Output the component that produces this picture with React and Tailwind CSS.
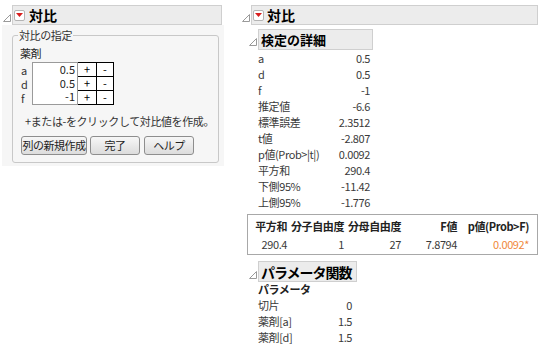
import React from 'react';

const font = { fontFamily: '"Noto Sans CJK JP", "Noto Sans", sans-serif' };

function Disclosure() {
    return (
        <svg width="8" height="8" viewBox="0 0 8 8" className="shrink-0">
            <path d="M7.5 0.5 L7.5 7.5 L0.5 7.5 Z" fill="none" stroke="#9a9a9a" strokeWidth="1" />
        </svg>
    );
}

function MenuButton() {
    return (
        <div className="w-[11px] h-[11px] border border-[#b4b4b4] bg-white rounded-[2px] flex items-center justify-center shrink-0">
            <svg width="7" height="4" viewBox="0 0 7 4">
                <path d="M0 0 L7 0 L3.5 4 Z" fill="#d81e1e" />
            </svg>
        </div>
    );
}

function Row({ label, value, labelW = 'w-[72px]', valueW = 'w-[40px]' }) {
    return (
        <div className="flex h-[16px] items-center text-[11px] leading-[16px] tracking-[-0.4px] text-[#3a3a3a]">
            <span className={`${labelW} whitespace-nowrap`}>{label}</span>
            <span className={`${valueW} text-right whitespace-nowrap`}>{value}</span>
        </div>
    );
}

function Button({ children, className }) {
    return (
        <div className={`h-[19px] border border-[#8e8e8e] rounded-[3px] bg-gradient-to-b from-[#f7f7f7] to-[#dcdcdc] flex items-center justify-center text-[11px] leading-[17px] tracking-[-0.5px] text-[#222] whitespace-nowrap ${className}`}>
            {children}
        </div>
    );
}

export default function App() {
    const contrast = [
        { label: 'a', value: '0.5' },
        { label: 'd', value: '0.5' },
        { label: 'f', value: '-1' },
    ];

    const details = [
        ['a', '0.5'],
        ['d', '0.5'],
        ['f', '-1'],
        ['推定値', '-6.6'],
        ['標準誤差', '2.3512'],
        ['t値', '-2.807'],
        ['p値(Prob>|t|)', '0.0092'],
        ['平方和', '290.4'],
        ['下側95%', '-11.42'],
        ['上側95%', '-1.776'],
    ];

    // column widths measured to each right edge
    const ftest = [
        { head: '平方和', value: '290.4', w: 'w-[30px]' },
        { head: '分子自由度', value: '1', w: 'w-[57px]' },
        { head: '分母自由度', value: '27', w: 'w-[57px]' },
        { head: 'F値', value: '7.8794', w: 'w-[56px]' },
        { head: 'p値(Prob>F)', value: '0.0092*', w: 'w-[72px]', accent: true },
    ];

    const params = [
        ['切片', '0'],
        ['薬剤[a]', '1.5'],
        ['薬剤[d]', '1.5'],
    ];

    return (
        <div className="w-[543px] h-[349px] bg-white flex overflow-hidden" style={font}>
            {/* left: contrast specification */}
            <div className="w-[237px] shrink-0 pt-[5px]">
                <div className="flex items-center">
                    <div className="w-[12px] pl-[3px] flex items-end h-[19px] pb-[3px]">
                        <Disclosure />
                    </div>
                    <div className="w-[210px] h-[20px] border border-[#cfcfcf] bg-[#ececec] flex items-center pl-[1px] gap-[4px]">
                        <MenuButton />
                        <span className="text-[14px] font-bold text-black leading-[18px]">対比</span>
                    </div>
                </div>
                <div className="ml-[2px] w-[222px] h-[141px] bg-[#f6f6f6] pt-[10px] pl-[10px]">
                    <div className="relative w-[207px] h-[128px] border border-[#c8c8c8] rounded-[3px] bg-[#f6f6f6] pl-[7px] pt-[9px]">
                        <span className="absolute left-[5px] top-[-9px] px-[1px] bg-[#f6f6f6] text-[11px] tracking-[-0.4px] text-[#333] leading-[16px]">対比の指定</span>
                        <div className="text-[11px] tracking-[-0.4px] text-[#222] leading-[16px]">薬剤</div>
                        <div className="flex mt-[1px]">
                            <div className="w-[12px] flex flex-col text-[11px] text-[#333] pl-[1px] pt-[1px]">
                                {contrast.map((c) => (
                                    <div key={c.label} className="h-[14px] leading-[14px]">{c.label}</div>
                                ))}
                            </div>
                            <div className="w-[46px] h-[43px] border border-[#9a9a9a] bg-white flex flex-col text-[11px] text-[#222] pr-[2px]">
                                {contrast.map((c) => (
                                    <div key={c.label} className="h-[13.6px] leading-[13.6px] text-right">{c.value}</div>
                                ))}
                            </div>
                            <div className="flex flex-col border-t border-black">
                                {contrast.map((c) => (
                                    <div key={c.label} className="flex h-[14px] border-b border-black bg-white text-[11px] leading-[13px]">
                                        <div className="w-[19px] border-r border-black text-center">+</div>
                                        <div className="w-[17px] border-r border-black text-center">-</div>
                                    </div>
                                ))}
                            </div>
                        </div>
                        <div className="mt-[8px] ml-[5px] text-[11px] tracking-[-0.4px] text-[#333] leading-[16px] whitespace-nowrap">+または-をクリックして対比値を作成。</div>
                        <div className="flex mt-[7px] ml-[1px]">
                            <Button className="w-[66px]">列の新規作成</Button>
                            <Button className="w-[50px] ml-[3px]">完了</Button>
                            <Button className="w-[50px] ml-[4px]">ヘルプ</Button>
                        </div>
                    </div>
                </div>
            </div>

            {/* right: report */}
            <div className="flex-1 pt-[5px]">
                <div className="flex items-center">
                    <div className="w-[14px] pl-[5px] flex items-end h-[19px] pb-[3px]">
                        <Disclosure />
                    </div>
                    <div className="w-[287px] h-[20px] border border-[#cfcfcf] bg-[#ececec] flex items-center pl-[1px] gap-[3px]">
                        <MenuButton />
                        <span className="text-[14px] font-bold text-black leading-[18px]">対比</span>
                    </div>
                </div>

                <div className="flex items-center mt-[4px] ml-[12px]">
                    <div className="w-[9px] flex items-end h-[19px] pb-[3px]">
                        <Disclosure />
                    </div>
                    <div className="w-[115px] h-[21px] border border-[#cfcfcf] bg-[#ececec] flex items-center pl-[2px]">
                        <span className="text-[13px] font-bold text-black leading-[18px]">検定の詳細</span>
                    </div>
                </div>

                <div className="ml-[21px]">
                    {details.map(([l, v]) => (
                        <Row key={l} label={l} value={v} />
                    ))}
                </div>

                <div className="ml-[10px] mt-[4px] w-[291px] h-[41px] border border-[#a8a8a8] pl-[9px] pt-[2px] flex">
                    {ftest.map((c) => (
                        <div key={c.head} className={`${c.w} shrink-0 flex flex-col items-end whitespace-nowrap text-[11px] tracking-[-0.4px]`}>
                            <span className="h-[18px] leading-[18px] font-bold text-[#222]">{c.head}</span>
                            <span className={`h-[18px] leading-[18px] ${c.accent ? 'text-[#f0883a]' : 'text-[#3a3a3a]'}`}>{c.value}</span>
                        </div>
                    ))}
                </div>

                <div className="flex items-center mt-[6px] ml-[12px]">
                    <div className="w-[9px] flex items-end h-[19px] pb-[2px]">
                        <Disclosure />
                    </div>
                    <div className="w-[99px] h-[21px] border border-[#cfcfcf] bg-[#ececec] flex items-center pl-[2px]">
                        <span className="text-[14px] font-bold text-black leading-[18px] tracking-[-1px] whitespace-nowrap">パラメータ関数</span>
                    </div>
                </div>

                <div className="ml-[21px] mt-[-1px]">
                    <div className="h-[16px] leading-[16px] flex items-center text-[11px] font-bold tracking-[-0.4px] text-[#222]">パラメータ</div>
                    {params.map(([l, v]) => (
                        <Row key={l} label={l} value={v} labelW="w-[55px]" valueW="w-[39px]" />
                    ))}
                </div>
            </div>
        </div>
    );
}
